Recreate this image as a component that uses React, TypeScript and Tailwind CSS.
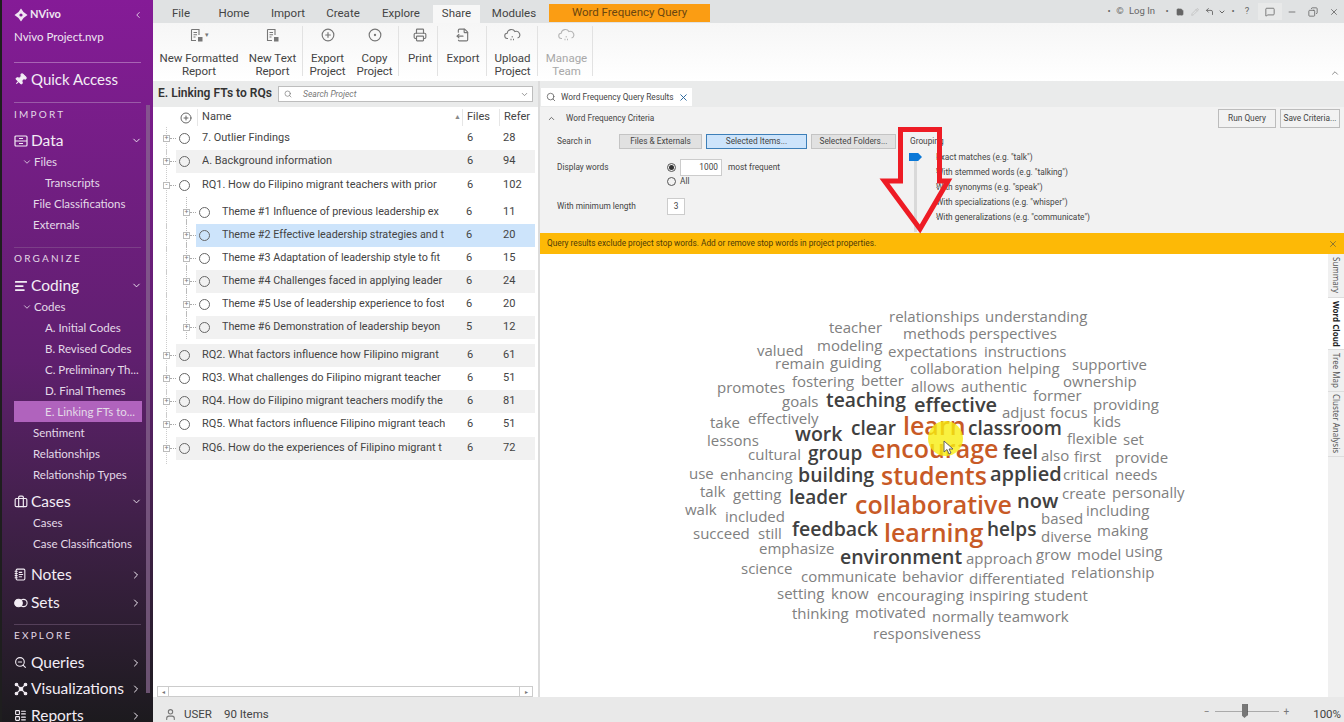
import { ChevronDown, ChevronRight, ChevronUp, ChevronLeft, Pin, AlignLeft, Briefcase, NotebookText, Search, ZoomOut, LayoutList, User, X, Save, Pencil, CornerUpLeft, MessageSquare, Minus, Copy, Printer, FileOutput, CirclePlus, CircleDot } from "lucide-react";

const sans = "font-['Roboto','Noto_Sans',sans-serif]";
const lato = "font-['Lato',sans-serif]";

function Label({ children }: { children: string }) {
  return <div className={`pl-[12px] h-[14px] flex items-center text-[10px] tracking-[2.2px] text-[#e3d8e6] ${lato}`}>{children}</div>;
}

function Section({ icon, label, open, mt }: { icon: React.ReactNode; label: string; open?: boolean; mt: number }) {
  return (
    <div style={{ marginTop: mt }} className={`h-[21px] flex items-center pl-[12px] pr-[11px] text-[#f3edf5] text-[15.5px] ${lato}`}>
      <span className="w-[17px] flex items-center">{icon}</span>
      <span className="flex-1">{label}</span>
      {open ? <ChevronDown size={11} strokeWidth={2} /> : <ChevronRight size={12} strokeWidth={2} />}
    </div>
  );
}

function Sub({ children, indent = 33, active }: { children: string; indent?: number; active?: boolean }) {
  return (
    <div className={`h-[21px] flex items-center text-[11.5px] text-[#e4dae8] whitespace-nowrap ${lato} ${active ? "bg-[#b063bd]" : ""}`} style={{ paddingLeft: indent - 14 }}>
      {children}
    </div>
  );
}

function Sidebar() {
  return (
    <aside className="w-[153px] h-full shrink-0 relative overflow-hidden border-l-2 border-[#1e1e1e] bg-gradient-to-b from-[#851b97] via-[#5f1f6e] to-[#1c1a1e]">
      <div className={`pl-[12px] pt-[7px] pr-[10px] h-[62px] text-[#efe6f2] ${lato}`}>
        <div className="flex items-center h-[15px]">
          <svg width="14" height="14" viewBox="0 0 14 14" className="mr-[2px]"><path d="M7 0.5 L9.5 4 L13.5 7 L9.5 10 L7 13.5 L4.5 10 L0.5 7 L4.5 4Z" fill="#efe6f2" /><circle cx="7" cy="7" r="1.6" fill="#851b97" /></svg>
          <span className="text-[11px] font-bold flex-1">NVivo</span>
          <ChevronLeft size={10} />
        </div>
        <div className="text-[11.5px] mt-[6px]">Nvivo Project.nvp</div>
      </div>
      <div className="mx-[12px] border-t border-[#a864b4]" />
      <div className={`h-[39px] pb-[6px] pl-[12px] flex items-center text-[#f3edf5] text-[15px] ${lato}`}>
        <Pin size={13} fill="currentColor" className="rotate-45 mr-[4px]" />Quick Access
      </div>
      <div className="mx-[12px] border-t border-[#9a5aa8]" />
      <div className="h-[4px]" />
      <Label>IMPORT</Label>
      <Section mt={9} label="Data" open icon={
        <svg width="14" height="14" viewBox="0 0 14 14" fill="none" stroke="currentColor" strokeWidth="1.2"><rect x="1" y="2" width="12" height="10" rx="1" /><path d="M1 7H13M5 4.5H9M5 9.5H9" /></svg>
      } />
      <div className="pl-[12px] pr-[11px]">
        <div className={`h-[21px] pl-[8px] flex items-center text-[11.5px] text-[#e4dae8] ${lato}`}><ChevronDown size={10} className="mr-[2px]" />Files</div>
        <Sub indent={45}>Transcripts</Sub>
        <Sub>File Classifications</Sub>
        <Sub>Externals</Sub>
      </div>
      <div className="mx-[12px] mt-[12px] border-t border-[#7c3f88]" />
      <div className="h-[3px]" />
      <Label>ORGANIZE</Label>
      <Section mt={10} label="Coding" open icon={<AlignLeft size={14} strokeWidth={3} />} />
      <div className="pl-[12px] pr-[11px]">
        <div className={`h-[21px] pl-[8px] flex items-center text-[11.5px] text-[#e4dae8] ${lato}`}><ChevronDown size={10} className="mr-[2px]" />Codes</div>
        <Sub indent={45}>A. Initial Codes</Sub>
        <Sub indent={45}>B. Revised Codes</Sub>
        <Sub indent={45}>C. Preliminary Th...</Sub>
        <Sub indent={45}>D. Final Themes</Sub>
        <Sub indent={45} active>E. Linking FTs to...</Sub>
        <Sub>Sentiment</Sub>
        <Sub>Relationships</Sub>
        <Sub>Relationship Types</Sub>
      </div>
      <Section mt={6} label="Cases" open icon={<Briefcase size={14} />} />
      <div className="pl-[12px] pr-[11px]">
        <Sub>Cases</Sub>
        <Sub>Case Classifications</Sub>
      </div>
      <Section mt={10} label="Notes" icon={<NotebookText size={13} />} />
      <Section mt={7} label="Sets" icon={
        <svg width="14" height="10" viewBox="0 0 14 10" fill="none" stroke="currentColor" strokeWidth="1.1"><circle cx="9.5" cy="5" r="3.6" /><circle cx="4.5" cy="5" r="3.8" fill="currentColor" /></svg>
      } />
      <div className="mx-[12px] mt-[11px] border-t border-[#55405a]" />
      <div className="h-[3px]" />
      <Label>EXPLORE</Label>
      <Section mt={10} label="Queries" icon={<ZoomOut size={13} />} />
      <Section mt={5} label="Visualizations" icon={
        <svg width="14" height="14" viewBox="0 0 14 14" fill="currentColor" stroke="currentColor" strokeWidth="1.1"><path d="M3 3L11 11M11 3L3 11" /><circle cx="7" cy="7" r="1.8" /><circle cx="2.5" cy="2.5" r="1.3" /><circle cx="11.5" cy="2.5" r="1.3" /><circle cx="2.5" cy="11.5" r="1.3" /><circle cx="11.5" cy="11.5" r="1.3" /></svg>
      } />
      <Section mt={6} label="Reports" icon={<LayoutList size={13} />} />
      <div className="absolute right-[3px] top-[105px] w-[4px] h-[588px] bg-[#8a6a92]/70" />
    </aside>
  );
}

const tabs = [
  { t: "File", w: 56 },
  { t: "Home", w: 50 },
  { t: "Import", w: 58 },
  { t: "Create", w: 52 },
  { t: "Explore", w: 64 },
  { t: "Share", w: 47, active: true },
  { t: "Modules", w: 68 },
];

function DocIcon({ caret }: { caret?: boolean }) {
  return (
    <span className="flex items-center">
      <svg width="15" height="15" viewBox="0 0 15 15" fill="none" stroke="currentColor" strokeWidth="1.1">
        <path d="M2.5 1.5H10V7M2.5 1.5V12.5H7" />
        <path d="M4.5 4.5H8M4.5 6.8H8M4.5 9H6.5" />
        <rect x="9" y="9" width="4.5" height="4.5" fill="currentColor" stroke="none" />
      </svg>
      {caret && <span className="text-[7px] ml-[1px]">▾</span>}
    </span>
  );
}

function CloudIcon() {
  return (
    <svg width="17" height="14" viewBox="0 0 17 14" fill="none" stroke="currentColor" strokeWidth="1.1">
      <path d="M4 10.5H3.5a2.6 2.6 0 0 1-.3-5.2A4.2 4.2 0 0 1 11 3.6a3.4 3.4 0 0 1 2.6 6.4" />
      <path d="M6.5 11.5h1M9 11.5h1M7.7 8.8h1" strokeWidth="1.6" />
    </svg>
  );
}

function RibbonBtn({ icon, l1, l2, w, pl = 0, muted }: { icon: React.ReactNode; l1: string; l2?: string; w: number; pl?: number; muted?: boolean }) {
  return (
    <div className={`flex flex-col items-center text-[11.5px] leading-[13px] ${muted ? "text-[#a8a8a8]" : "text-[#444]"}`} style={{ width: w, paddingLeft: pl }}>
      <div className={`h-[28px] pt-[5px] flex items-start ${muted ? "text-[#b5b5b5]" : "text-[#777]"}`}>{icon}</div>
      <div className="mt-[1px] whitespace-nowrap">{l1}</div>
      {l2 && <div className="whitespace-nowrap">{l2}</div>}
    </div>
  );
}

function RibbonSep() {
  return <div className="w-px h-[50px] mt-[3px] bg-[#e2e2e2]" />;
}

function TopCell({ w, children, className = "" }: { w: number; children: React.ReactNode; className?: string }) {
  return <div style={{ width: w }} className={`flex items-center justify-center shrink-0 ${className}`}>{children}</div>;
}

function Ribbon() {
  return (
    <div className={sans}>
      <div className="h-[23px] bg-[#e0e2e3] flex items-end text-[11.5px] text-[#444]">
        <div className="flex">
          {tabs.map((t) => (
            <div key={t.t} className={`h-[18px] flex items-center justify-center ${t.active ? "bg-[#f7f7f7]" : ""}`} style={{ width: t.w }}>{t.t}</div>
          ))}
        </div>
        <div className="ml-[1px] w-[161px] h-[18px] mb-px bg-[#fb9d13] flex items-center justify-center text-[#6a4610] text-[11.5px]">Word Frequency Query</div>
        <div className="flex-1 h-[23px] flex items-center justify-end text-[#666] text-[9.5px]">
          <TopCell w={10}>•</TopCell>
          <TopCell w={12}>©</TopCell>
          <TopCell w={32}>Log In</TopCell>
          <TopCell w={4}>{""}</TopCell>
          <TopCell w={10}>•</TopCell>
          <TopCell w={15}><Save size={8} fill="currentColor" /></TopCell>
          <TopCell w={15}><Pencil size={8} className="text-[#bbb]" /></TopCell>
          <TopCell w={14}><CornerUpLeft size={9} strokeWidth={2.4} /></TopCell>
          <TopCell w={12}><ChevronDown size={8} strokeWidth={3} /></TopCell>
          <TopCell w={10}>•</TopCell>
          <TopCell w={18}>?</TopCell>
          <TopCell w={2}>{""}</TopCell>
          <TopCell w={24} className="h-[17px] bg-[#e8e9e9]"><MessageSquare size={10} /></TopCell>
          <TopCell w={20}><Minus size={10} /></TopCell>
          <TopCell w={22}><Copy size={10} className="-scale-x-100" /></TopCell>
          <TopCell w={20}><X size={10} /></TopCell>
        </div>
      </div>
      <div className="h-[58px] bg-gradient-to-b from-[#f6f6f6] to-white flex pl-[2px] relative">
        <RibbonBtn w={88} icon={<DocIcon caret />} l1="New Formatted" l2="Report" />
        <RibbonBtn w={59} icon={<DocIcon />} l1="New Text" l2="Report" />
        <RibbonSep />
        <RibbonBtn w={48} pl={1} icon={<CirclePlus size={14} />} l1="Export" l2="Project" />
        <RibbonBtn w={47} icon={<CircleDot size={14} />} l1="Copy" l2="Project" />
        <RibbonSep />
        <RibbonBtn w={38} pl={4} icon={<Printer size={14} />} l1="Print" />
        <RibbonSep />
        <RibbonBtn w={48} pl={2} icon={<FileOutput size={14} />} l1="Export" />
        <RibbonSep />
        <RibbonBtn w={50} pl={1} icon={<CloudIcon />} l1="Upload" l2="Project" />
        <RibbonSep />
        <RibbonBtn w={54} pl={3} muted icon={<CloudIcon />} l1="Manage" l2="Team" />
        <RibbonSep />
        <ChevronUp size={10} className="absolute right-[4px] bottom-[3px] text-[#777]" />
      </div>
    </div>
  );
}

const rows = [
  { n: "7. Outlier Findings", f: 6, r: 28 },
  { n: "A. Background information", f: 6, r: 94, alt: true, gapAfter: 1 },
  { n: "RQ1. How do Filipino migrant teachers with prior", f: 6, r: 102, open: true, gapAfter: 4 },
  { n: "Theme #1 Influence of previous leadership ex", f: 6, r: 11, sub: true },
  { n: "Theme #2 Effective leadership strategies and t", f: 6, r: 20, sub: true, sel: true },
  { n: "Theme #3 Adaptation of leadership style to fit", f: 6, r: 15, sub: true },
  { n: "Theme #4 Challenges faced in applying leader", f: 6, r: 24, sub: true, alt: true },
  { n: "Theme #5 Use of leadership experience to fost", f: 6, r: 20, sub: true },
  { n: "Theme #6 Demonstration of leadership beyon", f: 5, r: 12, sub: true, alt: true, gapAfter: 5 },
  { n: "RQ2. What factors influence how Filipino migrant", f: 6, r: 61, alt: true },
  { n: "RQ3. What challenges do Filipino migrant teacher", f: 6, r: 51 },
  { n: "RQ4. How do Filipino migrant teachers modify the", f: 6, r: 81, alt: true },
  { n: "RQ5. What factors influence Filipino migrant teach", f: 6, r: 51, gapAfter: 1 },
  { n: "RQ6. How do the experiences of Filipino migrant t", f: 6, r: 72, alt: true },
];

function TreeRow({ row }: { row: (typeof rows)[number] }) {
  const left = row.sub ? 30 : 10;
  return (
    <div style={{ height: 23, marginBottom: row.gapAfter ?? 0 }} className="flex items-center text-[11.05px] text-[#444] relative">
      <span className="absolute left-[13px] top-0 h-[27px] border-l border-dotted border-[#ccc]" />
      {row.sub && <span className="absolute left-[33px] -top-[4px] h-[27px] border-l border-dotted border-[#bbb]" />}
      <div className="flex items-center shrink-0 relative" style={{ marginLeft: left }}>
        <span className="w-[7px] h-[7px] border border-[#bbb] text-[#777] text-[7px] leading-[5px] text-center bg-white">{row.open ? "-" : "+"}</span>
        <span className="w-[6px] border-t border-dotted border-[#aaa]" />
      </div>
      <div className={`flex-1 h-full flex items-center min-w-0 relative ${row.sel ? "bg-[#cde4fb]" : row.alt ? "bg-[#f1f1f1]" : ""}`}>
        <span className="w-[11px] h-[11px] rounded-full border-[1.5px] border-[#666] ml-[3px] mr-[12px] shrink-0" />
        <span className={`overflow-hidden whitespace-nowrap shrink-0 ${row.sub ? "text-[10.75px]" : "text-[10.95px]"}`} style={{ width: row.sub ? 222 : 243 }}>{row.n}</span>
        <span className="shrink-0 pl-[22px]" style={{ width: row.sub ? 59 : 58 }}>{row.f}</span>
        <span className="shrink-0">{row.r}</span>
      </div>
    </div>
  );
}

function ProjectPane() {
  return (
    <div className={`w-[385px] shrink-0 h-full flex flex-col bg-white ${sans}`}>
      <div className="h-[26px] bg-[#eaebeb] flex items-center pl-[5px] pr-[5px]">
        <span className="w-[120px] shrink-0 pb-[2px] text-[12px] font-semibold text-[#333] whitespace-nowrap">E. Linking FTs to RQs</span>
        <div className="flex-1 h-[16px] bg-white border border-[#bdbdbd] flex items-center pl-[5px] pr-[3px] text-[#777]">
          <Search size={8} className="mr-[11px]" />
          <span className="flex-1 italic text-[8.5px]">Search Project</span>
          <ChevronDown size={9} />
        </div>
      </div>
      <div className="h-[19px] mt-[1px] flex items-center text-[11.05px] text-[#444]">
        <CirclePlus size={12} className="ml-[27px] mr-[5px] text-[#666]" />
        <span className="w-[265px] h-[17px] flex items-center justify-between pl-[4px] pr-[1px] border-l border-[#e6e6e6]">Name<span className="text-[7px] text-[#888]">▲</span></span>
        <span className="w-[37px] h-[17px] flex items-center pl-[4px] border-l border-[#e6e6e6]">Files</span>
        <span className="h-[17px] flex items-center pl-[4px] border-l border-[#e6e6e6]">Refer</span>
      </div>
      <div className="flex-1 min-h-0 pr-[3px] relative">
        {rows.map((r) => <TreeRow key={r.n} row={r} />)}
      </div>
      <div className="h-[11px] ml-[4px] mr-[5px] border border-[#ccc] flex items-center text-[#777] text-[6px]">
        <span className="w-[11px] text-center border-r border-[#ccc]">◂</span>
        <span className="flex-1" />
        <span className="w-[13px] text-center border-l border-[#ccc]">▸</span>
      </div>
    </div>
  );
}

function GrayBtn({ children, w, active }: { children: string; w: number; active?: boolean }) {
  return (
    <div className={`h-[15px] flex items-center justify-center text-[8.3px] text-[#444] border ${active ? "bg-[#cde4fb] border-[#3d7fb8]" : "bg-[#e1e1e1] border-[#c4c4c4]"}`} style={{ width: w }}>
      {children}
    </div>
  );
}

const groupings = [
  'Exact matches (e.g. "talk")',
  'With stemmed words (e.g. "talking")',
  'With synonyms (e.g. "speak")',
  'With specializations (e.g. "whisper")',
  'With generalizations (e.g. "communicate")',
];

function Criteria() {
  return (
    <div className="h-[126px] bg-[#f2f2f2] relative text-[8.3px] text-[#444] pt-[5px]">
      <div className="flex items-center pl-[7px] h-[13px]">
        <ChevronUp size={9} className="mr-[10px]" />
        <span>Word Frequency Criteria</span>
        <div className="ml-auto flex gap-[4px] pr-[4px]">
          <div className="w-[58px] h-[19px] bg-[#f2f2f2] border border-[#bcbcbc] flex items-center justify-center">Run Query</div>
          <div className="w-[60px] h-[19px] bg-[#f2f2f2] border border-[#bcbcbc] flex items-center justify-center">Save Criteria...</div>
        </div>
      </div>
      <div className="flex items-center mt-[9px] pl-[17px]">
        <div className="w-[62px]">Search in</div>
        <div className="flex gap-[4px]">
          <GrayBtn w={83}>Files &amp; Externals</GrayBtn>
          <GrayBtn w={101} active>Selected Items...</GrayBtn>
          <GrayBtn w={85}>Selected Folders...</GrayBtn>
        </div>
        <div className="ml-[14px]">Grouping</div>
      </div>
      <div className="flex items-start mt-[10px] pl-[17px] relative">
        <div className="w-[110px] h-[17px] flex items-center">Display words</div>
        <div>
          <div className="flex items-center gap-[4px]">
            <span className="w-[9px] h-[9px] rounded-full border border-[#555] flex items-center justify-center"><span className="w-[5px] h-[5px] rounded-full bg-[#333]" /></span>
            <span className="w-[42px] h-[17px] bg-white border border-[#ccc] flex items-center justify-end pr-[3px]">1000</span>
            <span className="ml-[2px]">most frequent</span>
          </div>
          <div className="flex items-center gap-[4px] -mt-[1px] h-[13px]">
            <span className="w-[9px] h-[9px] rounded-full border border-[#555]" />
            <span>All</span>
          </div>
        </div>
      </div>
      <div className="flex items-center mt-[10px] pl-[17px]">
        <div className="w-[110px]">With minimum length</div>
        <span className="w-[18px] h-[17px] bg-white border border-[#ccc] flex items-center justify-center">3</span>
      </div>
      {/* grouping slider */}
      <div className="absolute left-[374px] top-[52px] w-[3px] h-[73px] bg-[#d9d9d9]" />
      <div className="absolute left-[369px] top-[46px] w-[13px] h-[8px] bg-[#0a78d7] [clip-path:polygon(0_0,70%_0,100%_50%,70%_100%,0_100%)]" />
      <div className="absolute left-[386px] top-[43px] text-[8.3px] leading-[15px] whitespace-nowrap pl-[10px]">
        {groupings.map((g) => (
          <div key={g} className="relative">
            <span className="absolute left-0 top-[7px] w-[3px] h-px bg-[#aaa]" />
            {g}
          </div>
        ))}
      </div>
    </div>
  );
}

const gray = "text-[#808080] font-medium";
const dark = "text-[#404040] font-semibold";
const orange = "text-[#c85a26] font-semibold";

// place on the cloud is the content here: [word, left, centre y, size, tone]
const cloud: [string, number, number, number, string][] = [
  ["relationships", 889, 316, 15, gray], ["understanding", 985, 316, 15, gray], ["teacher", 829, 327, 15, gray],
  ["methods", 903, 333, 15, gray], ["perspectives", 969, 333, 15, gray], ["modeling", 817, 345, 15, gray],
  ["valued", 757, 350, 15, gray], ["expectations", 888, 351, 15, gray], ["instructions", 984, 351, 15, gray],
  ["remain", 775, 363, 15, gray], ["guiding", 830, 362, 15, gray], ["supportive", 1072, 364, 15, gray],
  ["collaboration", 910, 368, 15, gray], ["helping", 1008, 368, 15, gray], ["fostering", 792, 381, 15, gray],
  ["better", 861, 380, 15, gray], ["ownership", 1063, 381, 15, gray], ["promotes", 717, 387, 15, gray],
  ["allows", 911, 386, 15, gray], ["authentic", 961, 386, 15, gray], ["goals", 782, 401, 15, gray],
  ["teaching", 826, 400, 19.3, dark], ["effective", 914, 405, 20, dark], ["former", 1033, 395, 15, gray],
  ["providing", 1093, 404, 15, gray], ["adjust", 1002, 412, 15, gray], ["focus", 1050, 412, 15, gray],
  ["take", 710, 422, 15, gray], ["effectively", 748, 418, 15, gray], ["kids", 1093, 421, 15, gray],
  ["work", 795, 434, 19.5, dark], ["clear", 851, 428, 19, dark], ["learn", 903, 425, 25, orange],
  ["classroom", 968, 428, 19, dark], ["flexible", 1067, 438, 15, gray], ["set", 1123, 439, 15, gray],
  ["lessons", 707, 440, 15, gray], ["cultural", 748, 454, 15, gray], ["group", 808, 453, 19, dark],
  ["encourage", 871, 448, 25, orange], ["feel", 1003, 452, 19.5, dark], ["also", 1041, 455, 15, gray],
  ["first", 1074, 456, 15, gray], ["provide", 1115, 457, 15, gray], ["use", 689, 473, 15, gray],
  ["enhancing", 720, 474, 15, gray], ["building", 798, 475, 19.5, dark], ["students", 881, 475, 25, orange],
  ["applied", 990, 474, 20, dark], ["critical", 1063, 474, 15, gray], ["needs", 1115, 474, 15, gray],
  ["talk", 700, 491, 15, gray], ["getting", 733, 494, 15, gray], ["leader", 789, 497, 19, dark],
  ["collaborative", 855, 504, 25, orange], ["now", 1017, 501, 20, dark], ["create", 1062, 493, 15, gray],
  ["personally", 1112, 492, 15, gray], ["walk", 685, 509, 15, gray], ["included", 725, 516, 15, gray],
  ["including", 1086, 510, 15, gray], ["feedback", 792, 529, 19.5, dark], ["learning", 884, 532, 25, orange],
  ["helps", 987, 529, 19, dark], ["based", 1041, 518, 15, gray], ["succeed", 693, 533, 15, gray],
  ["still", 758, 533, 15, gray], ["diverse", 1041, 536, 15, gray], ["making", 1097, 530, 15, gray],
  ["emphasize", 759, 548, 15, gray], ["using", 1125, 551, 15, gray], ["environment", 840, 557, 19.5, dark],
  ["approach", 966, 558, 15, gray], ["grow", 1036, 554, 15, gray], ["model", 1077, 554, 15, gray],
  ["science", 741, 568, 15, gray], ["communicate", 801, 576, 15, gray], ["behavior", 902, 576, 15, gray],
  ["differentiated", 969, 578, 15, gray], ["relationship", 1071, 572, 15, gray], ["setting", 777, 593, 15, gray],
  ["know", 831, 593, 15, gray], ["encouraging", 877, 595, 15, gray], ["inspiring", 969, 595, 15, gray],
  ["student", 1034, 595, 15, gray], ["thinking", 792, 613, 15, gray], ["motivated", 855, 612, 15, gray],
  ["normally", 932, 616, 15, gray], ["teamwork", 998, 616, 15, gray], ["responsiveness", 873, 633, 15, gray],
];

function SideTab({ children, h, active }: { children: string; h: number; active?: boolean }) {
  return (
    <div style={{ height: h }} className={`w-[16px] flex items-center justify-center border-b border-[#ddd] ${active ? "bg-white" : "bg-[#f0f0f0]"}`}>
      <span className={`[writing-mode:vertical-rl] text-[8px] whitespace-nowrap font-['Noto_Sans',sans-serif] ${active ? "text-[#222] font-bold" : "text-[#555]"}`}>{children}</span>
    </div>
  );
}

function ResultsPane() {
  return (
    <div className={`flex-1 min-w-0 h-full flex flex-col border-l-[2px] border-[#dcdcdc] ${sans}`}>
      <div className="h-[26px] bg-[#eaebeb] flex items-end pl-[1px]">
        <div className="w-[151px] h-[18px] bg-white flex items-center pl-[5px] text-[8.3px] text-[#444] mb-[1px]">
          <Search size={10} className="mr-[5px] text-[#666]" />
          <span className="flex-1 whitespace-nowrap">Word Frequency Query Results</span>
          <X size={11} strokeWidth={2} className="text-[#1f5f97] mr-[3px]" />
        </div>
      </div>
      <Criteria />
      <div className="h-[21px] bg-[#fdb906] flex items-center justify-between pl-[7px] pr-[6px] text-[8.3px] text-[#4d3b09]">
        <span>Query results exclude project stop words. Add or remove stop words in project properties.</span>
        <X size={10} className="text-[#7a6a35]" />
      </div>
      <div className="flex-1 min-h-0 bg-white flex justify-end">
        <div className="w-[16px] h-full bg-[#f0f0f0] flex flex-col">
          <SideTab h={44}>Summary</SideTab>
          <SideTab h={52} active>Word Cloud</SideTab>
          <SideTab h={42}>Tree Map</SideTab>
          <SideTab h={65}>Cluster Analysis</SideTab>
        </div>
      </div>
    </div>
  );
}

function StatusBar() {
  return (
    <div className={`h-[25px] bg-[#e9e9e9] flex items-center pt-[4px] pl-[11px] pr-[3px] text-[11.5px] text-[#444] ${sans}`}>
      <User size={13} className="mr-[7px] mt-[6px] text-[#777]" />
      <span className="mr-[12px] mt-[6px]">USER</span>
      <span className="mt-[6px]">90 Items</span>
      <div className="ml-auto flex items-center">
        <span className="text-[#777] text-[10px]">−</span>
        <div className="relative w-[64px] h-px bg-[#aaa] mx-[5px]">
          <div className="absolute left-[27px] -top-[7px] w-[6px] h-[14px] bg-[#777] border-r border-[#333] [clip-path:polygon(0_0,100%_0,100%_80%,50%_100%,0_80%)]" />
        </div>
        <span className="text-[#777] text-[10px]">+</span>
        <span className="ml-[24px] mt-[6px]">100%</span>
      </div>
    </div>
  );
}

export default function App() {
  return (
    <div className="w-[1344px] h-[722px] relative overflow-hidden flex bg-white">
      <Sidebar />
      <div className="flex-1 min-w-0 h-full flex flex-col">
        <Ribbon />
        <div className="flex-1 min-h-0 flex">
          <ProjectPane />
          <ResultsPane />
        </div>
        <StatusBar />
      </div>
      {/* word cloud */}
      <div className="absolute inset-0 font-['Open_Sans',sans-serif] pointer-events-none">
        {cloud.map(([w, x, y, s, tone]) => (
          <span key={w} className={`absolute leading-none whitespace-nowrap -translate-y-1/2 ${tone}`} style={{ left: x, top: y, fontSize: s }}>{w}</span>
        ))}
      </div>
      {/* cursor highlight */}
      <div className="absolute left-[928px] top-[421px] w-[35px] h-[35px] rounded-full bg-[#f7ee10]/80" />
      <svg className="absolute left-[943px] top-[440px]" width="12" height="16" viewBox="0 0 12 16"><path d="M1 1 L1 12 L4 9.5 L6 14 L8 13 L6 9 L10 9Z" fill="#fff" stroke="#555" strokeWidth="0.9" /></svg>
      {/* red arrow */}
      <svg className="absolute left-[875px] top-[122px]" width="90" height="116" viewBox="0 0 90 116">
        <path d="M25.5 7.5 H64.5 V59 H73 L45 107 L9.5 59 H25.5Z" fill="none" stroke="#ee1c25" strokeWidth="5" strokeLinejoin="miter" />
      </svg>
    </div>
  );
}
